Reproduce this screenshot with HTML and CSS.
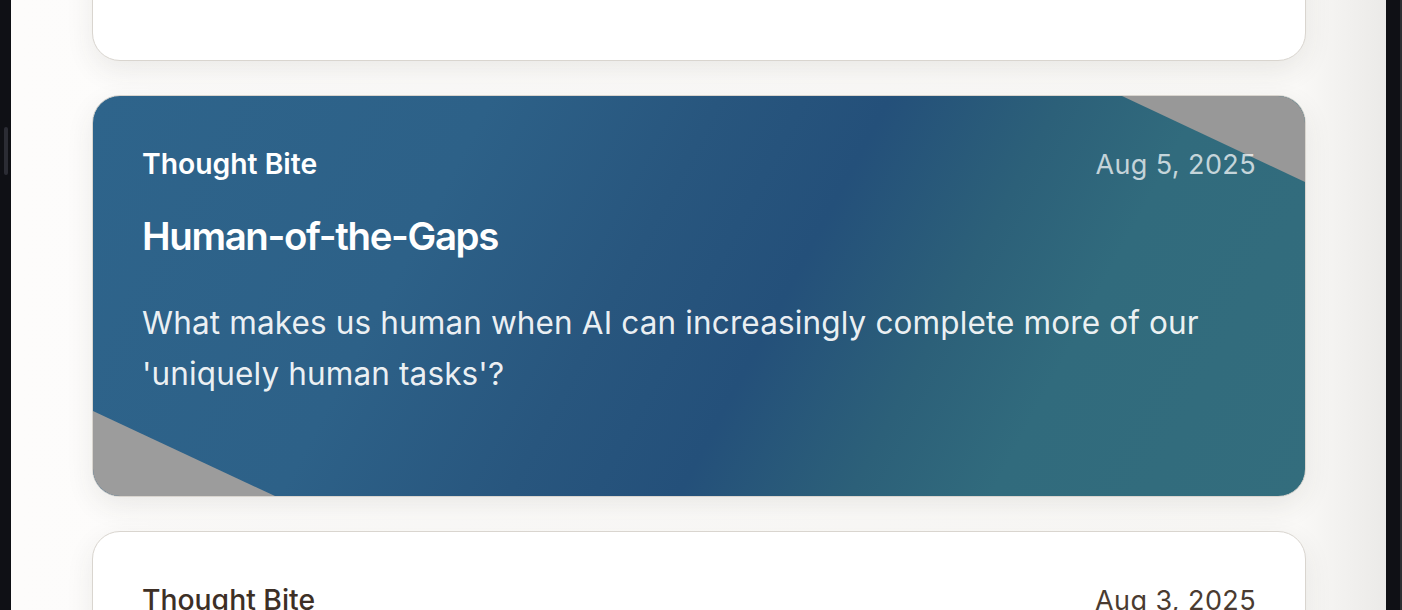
FILE: index.html
```html
<!DOCTYPE html>
<html lang="en">
<head>
<meta charset="utf-8">
<title>Thought Bites</title>
<link rel="stylesheet" href="styles.css">
</head>
<body>
<div class="frame">
  <aside class="rail-left"><span class="rail-thumb"></span></aside>
  <main class="page">
    <div class="feed">
      <article class="card card-plain card-cut">
        <div class="card-head">
          <span class="kind">Thought Bite</span>
          <span class="date">Aug 7, 2025</span>
        </div>
        <h2 class="title">Earlier bite</h2>
        <p class="summary">A previous entry in the list.</p>
      </article>

      <article class="card card-featured">
        <span class="deco deco-tr"></span>
        <span class="deco deco-bl"></span>
        <div class="card-head">
          <span class="kind">Thought Bite</span>
          <span class="date">Aug 5, 2025</span>
        </div>
        <h2 class="title">Human-of-the-Gaps</h2>
        <p class="summary">What makes us human when AI can increasingly complete more of our 'uniquely human tasks'?</p>
      </article>

      <article class="card card-plain">
        <div class="card-head">
          <span class="kind">Thought Bite</span>
          <span class="date">Aug 3, 2025</span>
        </div>
        <h2 class="title">Next bite</h2>
        <p class="summary">Another entry in the list.</p>
      </article>
    </div>
  </main>
  <aside class="rail-right"></aside>
</div>
</body>
</html>
```

FILE: styles.css
```css
* { box-sizing: border-box; }

html, body {
  margin: 0;
  height: 100%;
  overflow: hidden;
}

body {
  font-family: Inter, "Noto Sans", sans-serif;
  background: #0f1015;
}

.frame {
  display: flex;
  height: 610px;
}

.rail-left {
  width: 11px;
  flex: none;
  background: #0f1015;
  padding: 127px 0 0 4px;
}

.rail-thumb {
  display: block;
  width: 4px;
  height: 48px;
  border-radius: 2px;
  background: #2b2c34;
}

.rail-right {
  width: 16px;
  flex: none;
  background: linear-gradient(to right, #0f1015 0, #0f1015 14px, #2e2f33 14px, #2e2f33 100%);
}

.page {
  flex: 1;
  overflow: hidden;
  padding-left: 81px;
  background: linear-gradient(to right, #fdfcfb 0, #faf9f7 calc(100% - 90px), #ebeae8 100%);
}

.feed {
  width: 1214px;
  margin-top: -340px;
  display: flex;
  flex-direction: column;
  gap: 34px;
}

.card {
  position: relative;
  overflow: hidden;
  border-radius: 28px;
  border: 1px solid #d9d5cf;
  padding: 51px 49px 100px;
  box-shadow: 0 10px 28px rgba(60, 50, 40, 0.09);
}

.card-plain {
  background: #ffffff;
  color: #3d2f26;
}

.card-cut { height: 401px; }

.card-featured {
  height: 402px;
  color: #ffffff;
  background: linear-gradient(118deg, #2e648b 0%, #2d6188 28%, #28567e 44%, #24507a 56%, #2c6079 68%, #316b7d 78%, #336d7d 100%);
}

.deco {
  position: absolute;
  background: #989898;
}

.deco-tr {
  top: 0;
  right: 0;
  width: 183px;
  height: 86px;
  clip-path: polygon(0 0, 100% 0, 100% 100%);
}

.deco-bl {
  bottom: 0;
  left: 0;
  width: 182px;
  height: 85px;
  clip-path: polygon(0 0, 100% 100%, 0 100%);
  background: #9c9c9c;
}

.card-head {
  position: relative;
  display: flex;
  justify-content: space-between;
  align-items: baseline;
  line-height: 34px;
}

.kind {
  font-size: 28.3px;
  font-weight: 600;
}

.card-plain .kind { font-weight: 500; }

.date {
  font-size: 27px;
  font-weight: 400;
  letter-spacing: 0.4px;
  color: rgba(255, 255, 255, 0.72);
}

.card-plain .date { color: #4a3b31; }

.title {
  position: relative;
  margin: 31px 0 0;
  font-size: 38.4px;
  font-weight: 600;
  line-height: 46px;
  letter-spacing: -1.35px;
}

.summary {
  position: relative;
  margin: 38px 0 0;
  font-size: 31.5px;
  font-weight: 400;
  line-height: 51px;
  letter-spacing: 0.13px;
  color: rgba(255, 255, 255, 0.92);
}

.card-plain .summary { color: #4a3b31; }
```
